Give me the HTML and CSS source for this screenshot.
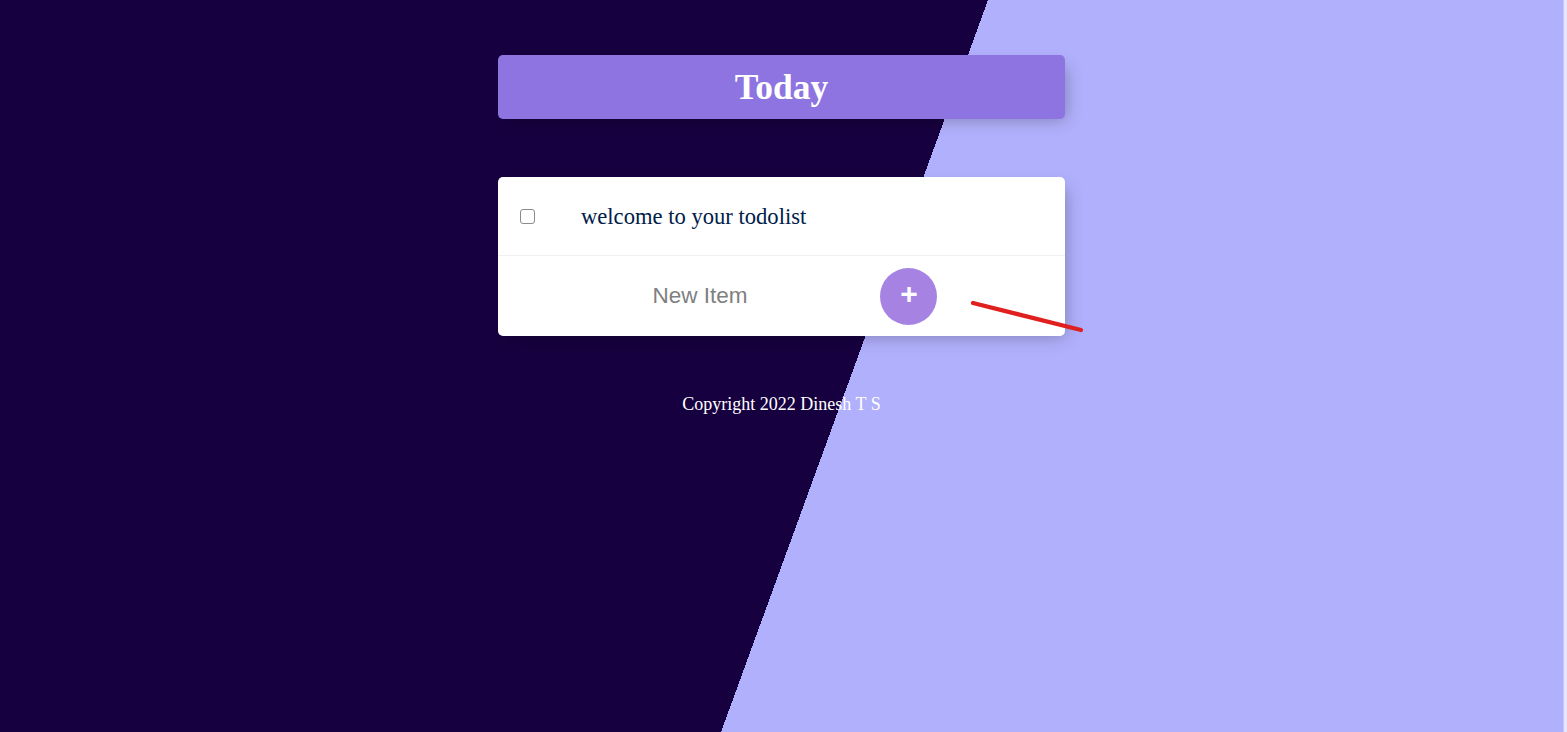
FILE: index.html
```html
<!DOCTYPE html>
<html lang="en">
<head>
<meta charset="utf-8">
<title>To-Do List</title>
<link rel="stylesheet" href="styles.css">
</head>
<body>
<div class="screen">
  <main class="page">
    <div class="box heading"><h1>Today</h1></div>
    <div class="box list">
      <div class="item">
        <input class="check" type="checkbox">
        <p>welcome to your todolist</p>
      </div>
      <form class="item add-form" onsubmit="return false">
        <input class="new-item" type="text" placeholder="New Item" autocomplete="off">
        <button class="add-btn" type="submit">+</button>
      </form>
    </div>
    <footer class="footer">Copyright 2022 Dinesh T S</footer>
    <svg class="annot" width="120" height="40" viewBox="0 0 120 40" aria-hidden="true">
      <line x1="4" y1="6" x2="112" y2="33" stroke="#e0201f" stroke-width="4.2" stroke-linecap="round"/>
    </svg>
  </main>
  <div class="edge"></div>
</div>
</body>
</html>
```

FILE: styles.css
```css
html, body {
  margin: 0;
  padding: 0;
  height: 100%;
  overflow: hidden;
}

body {
  font-family: "Liberation Serif", "Times New Roman", serif;
}

.screen {
  display: flex;
  width: 100%;
  height: 732px;
}

.page {
  position: relative;
  flex: 1;
  height: 732px;
  padding-top: 55px;
  box-sizing: border-box;
  background: linear-gradient(110.04deg, #17003f 0, #17003f 928.2px, #b1b0fc 928.2px, #b1b0fc 100%);
}

.edge {
  width: 4px;
  height: 100%;
  background: linear-gradient(90deg, #c4c3fb 0 1px, #e6e6fd 1px);
}

.box {
  width: 567px;
  margin: 0 auto;
  border-radius: 5px;
  box-shadow: 6px 6px 17px -6px rgba(0, 0, 0, 0.3);
}

.heading {
  height: 64px;
  background-color: #8d74e0;
  display: flex;
  align-items: center;
  justify-content: center;
  margin-bottom: 58px;
}

.heading h1 {
  margin: 0;
  color: #ffffff;
  font-size: 35.5px;
  font-weight: 700;
  line-height: 1;
  padding-top: 2px;
}

.list {
  background: #ffffff;
}

.item {
  display: flex;
  align-items: center;
  height: 79px;
  border-bottom: 1px solid #f1f1f1;
  box-sizing: border-box;
}

.item:last-child {
  border-bottom: 0;
  height: 80px;
}

.check {
  appearance: none;
  -webkit-appearance: none;
  width: 15px;
  height: 15px;
  margin: 0 0 0 22px;
  border: 1px solid #8a8a8a;
  border-radius: 3px;
  background: #fff;
  box-sizing: border-box;
  flex: none;
}

.item p {
  margin: 0 0 0 46px;
  padding-top: 2px;
  font-size: 22.6px;
  color: #00204a;
  font-weight: 400;
}

.add-form {
  padding-left: 22px;
}

.new-item {
  width: 360px;
  height: 60px;
  border: none;
  background: transparent;
  text-align: center;
  font-family: "Liberation Sans", Arial, sans-serif;
  font-size: 22.5px;
  color: #333;
  outline: none;
  padding: 0;
}

.new-item::placeholder {
  color: #808080;
  opacity: 1;
}

.add-btn {
  width: 57px;
  height: 57px;
  border: 0;
  border-radius: 50%;
  background-color: #a683e3;
  color: #ffffff;
  font-family: "Liberation Sans", Arial, sans-serif;
  font-size: 30px;
  font-weight: 700;
  line-height: 1;
  padding: 0 0 5px 1px;
  display: flex;
  align-items: center;
  justify-content: center;
}

.footer {
  margin-top: 58px;
  text-align: center;
  color: #ffffff;
  font-size: 18px;
}

.annot {
  position: absolute;
  left: 969px;
  top: 297px;
}
```
